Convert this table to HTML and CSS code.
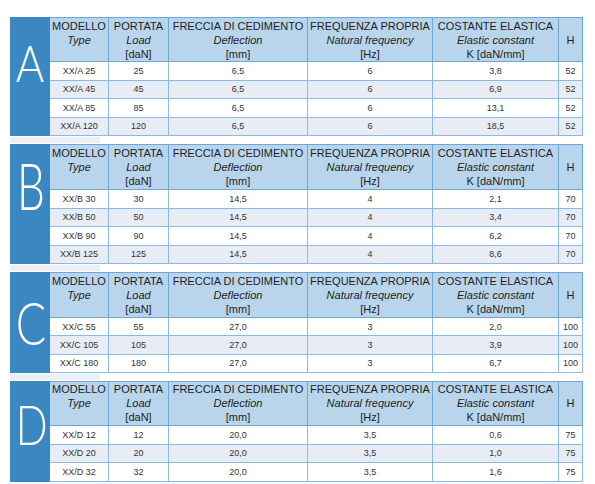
FILE: index.html
```html
<!DOCTYPE html>
<html>
<head>
<meta charset="utf-8">
<link rel="stylesheet" href="styles.css">
</head>
<body>
<div class="page">

<table class="spec spec-a">
  <colgroup>
    <col class="c-letter"><col class="c-model"><col class="c-load"><col class="c-defl"><col class="c-freq"><col class="c-k"><col class="c-h">
  </colgroup>
  <tr class="head">
    <td class="letter" rowspan="5"><span class="glyph glyph-a">A</span></td>
    <th>MODELLO<br><i>Type</i><br>&nbsp;</th>
    <th>PORTATA<br><i>Load</i><br>[daN]</th>
    <th>FRECCIA DI CEDIMENTO<br><i>Deflection</i><br>[mm]</th>
    <th>FREQUENZA PROPRIA<br><i>Natural frequency</i><br>[Hz]</th>
    <th>COSTANTE ELASTICA<br><i>Elastic constant</i><br>K [daN/mm]</th>
    <th>H</th>
  </tr>
  <tr class="odd"><td>XX/A 25</td><td>25</td><td>6,5</td><td>6</td><td>3,8</td><td>52</td></tr>
  <tr class="even"><td>XX/A 45</td><td>45</td><td>6,5</td><td>6</td><td>6,9</td><td>52</td></tr>
  <tr class="odd"><td>XX/A 85</td><td>85</td><td>6,5</td><td>6</td><td>13,1</td><td>52</td></tr>
  <tr class="even"><td>XX/A 120</td><td>120</td><td>6,5</td><td>6</td><td>18,5</td><td>52</td></tr>
</table>
<div class="gap"><div class="gap-bar"></div></div>

<table class="spec spec-b">
  <colgroup>
    <col class="c-letter"><col class="c-model"><col class="c-load"><col class="c-defl"><col class="c-freq"><col class="c-k"><col class="c-h">
  </colgroup>
  <tr class="head">
    <td class="letter" rowspan="5"><span class="glyph glyph-b">B</span></td>
    <th>MODELLO<br><i>Type</i><br>&nbsp;</th>
    <th>PORTATA<br><i>Load</i><br>[daN]</th>
    <th>FRECCIA DI CEDIMENTO<br><i>Deflection</i><br>[mm]</th>
    <th>FREQUENZA PROPRIA<br><i>Natural frequency</i><br>[Hz]</th>
    <th>COSTANTE ELASTICA<br><i>Elastic constant</i><br>K [daN/mm]</th>
    <th>H</th>
  </tr>
  <tr class="odd"><td>XX/B 30</td><td>30</td><td>14,5</td><td>4</td><td>2,1</td><td>70</td></tr>
  <tr class="even"><td>XX/B 50</td><td>50</td><td>14,5</td><td>4</td><td>3,4</td><td>70</td></tr>
  <tr class="odd"><td>XX/B 90</td><td>90</td><td>14,5</td><td>4</td><td>6,2</td><td>70</td></tr>
  <tr class="even"><td>XX/B 125</td><td>125</td><td>14,5</td><td>4</td><td>8,6</td><td>70</td></tr>
</table>
<div class="gap"><div class="gap-bar"></div></div>

<table class="spec spec-c">
  <colgroup>
    <col class="c-letter"><col class="c-model"><col class="c-load"><col class="c-defl"><col class="c-freq"><col class="c-k"><col class="c-h">
  </colgroup>
  <tr class="head">
    <td class="letter" rowspan="4"><span class="glyph glyph-c">C</span></td>
    <th>MODELLO<br><i>Type</i><br>&nbsp;</th>
    <th>PORTATA<br><i>Load</i><br>[daN]</th>
    <th>FRECCIA DI CEDIMENTO<br><i>Deflection</i><br>[mm]</th>
    <th>FREQUENZA PROPRIA<br><i>Natural frequency</i><br>[Hz]</th>
    <th>COSTANTE ELASTICA<br><i>Elastic constant</i><br>K [daN/mm]</th>
    <th>H</th>
  </tr>
  <tr class="odd"><td>XX/C 55</td><td>55</td><td>27,0</td><td>3</td><td>2,0</td><td>100</td></tr>
  <tr class="even"><td>XX/C 105</td><td>105</td><td>27,0</td><td>3</td><td>3,9</td><td>100</td></tr>
  <tr class="odd"><td>XX/C 180</td><td>180</td><td>27,0</td><td>3</td><td>6,7</td><td>100</td></tr>
</table>
<div class="gap"><div class="gap-bar"></div></div>

<table class="spec spec-d">
  <colgroup>
    <col class="c-letter"><col class="c-model"><col class="c-load"><col class="c-defl"><col class="c-freq"><col class="c-k"><col class="c-h">
  </colgroup>
  <tr class="head">
    <td class="letter" rowspan="4"><span class="glyph glyph-d">D</span></td>
    <th>MODELLO<br><i>Type</i><br>&nbsp;</th>
    <th>PORTATA<br><i>Load</i><br>[daN]</th>
    <th>FRECCIA DI CEDIMENTO<br><i>Deflection</i><br>[mm]</th>
    <th>FREQUENZA PROPRIA<br><i>Natural frequency</i><br>[Hz]</th>
    <th>COSTANTE ELASTICA<br><i>Elastic constant</i><br>K [daN/mm]</th>
    <th>H</th>
  </tr>
  <tr class="odd"><td>XX/D 12</td><td>12</td><td>20,0</td><td>3,5</td><td>0,6</td><td>75</td></tr>
  <tr class="even"><td>XX/D 20</td><td>20</td><td>20,0</td><td>3,5</td><td>1,0</td><td>75</td></tr>
  <tr class="odd"><td>XX/D 32</td><td>32</td><td>20,0</td><td>3,5</td><td>1,6</td><td>75</td></tr>
</table>

</div>
</body>
</html>
```

FILE: styles.css
```css
html, body {
  margin: 0;
  padding: 0;
  background: #ffffff;
}

.page {
  padding: 17px 0 0 10px;
  font-family: "Liberation Sans", Arial, sans-serif;
}

.spec {
  border-collapse: collapse;
  table-layout: fixed;
  width: 572px;
  border: 1px solid #4f8fc6;
}

.c-letter { width: 39px; }
.c-model { width: 59px; }
.c-load { width: 60px; }
.c-defl { width: 139px; }
.c-freq { width: 125px; }
.c-k { width: 126px; }
.c-h { width: 24px; }

.spec th,
.spec td {
  padding: 0;
  text-align: center;
  border: 1px solid #6ea6d6;
}

.spec th {
  background: #b9d5ec;
  font-weight: normal;
  font-size: 11px;
  line-height: 14px;
  color: #1e1e1e;
  white-space: nowrap;
  vertical-align: middle;
}

.spec th i {
  font-style: italic;
}

.spec .head { height: 44px; }
.spec-b .head, .spec-c .head { height: 45px; }

.spec tr.odd td,
.spec tr.even td {
  font-size: 9px;
  color: #333333;
  vertical-align: middle;
  border-color: #8cb9e0;
}

.spec-a tr.odd, .spec-a tr.even,
.spec-b tr.odd, .spec-b tr.even { height: 18.5px; }
.spec-c tr.odd, .spec-c tr.even { height: 18.33px; }
.spec-d tr.odd, .spec-d tr.even { height: 18.67px; }

.spec tr.odd td { background: #ffffff; }
.spec tr.even td { background: #e8edf5; }

.spec td.letter {
  background: #3a87c1;
  border-color: #3a87c1;
  vertical-align: top;
  padding: 0;
}

.glyph {
  display: block;
  color: #ffffff;
  font-family: "Lato", "Open Sans", sans-serif;
  font-weight: 300;
  line-height: 1;
  text-align: center;
  transform-origin: center center;
}

.glyph-a { font-size: 51px; margin-top: 19px; transform: scaleX(0.85); }
.glyph-b { font-size: 65px; margin-top: 8px; transform: scaleX(0.68); }
.glyph-c { font-size: 60px; margin-top: 19px; transform: scaleX(0.75); }
.glyph-d { font-size: 56px; margin-top: 14px; transform: scaleX(0.75); }

.gap {
  height: 8px;
  padding-top: 1px;
  box-sizing: border-box;
}

.gap-bar {
  width: 90px;
  height: 6px;
  background: #eceff4;
}
```
